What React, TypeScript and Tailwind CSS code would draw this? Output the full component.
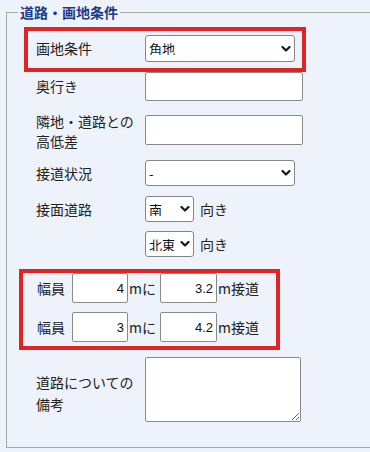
import React from "react";

// 下向きシェブロン（セレクトの矢印）
const Chevron = () => (
  <svg
    width="10"
    height="7"
    viewBox="0 0 10 7"
    className="pointer-events-none absolute right-[4px] top-1/2 -translate-y-1/2"
  >
    <polyline points="1.5,1.5 5,5 8.5,1.5" fill="none" stroke="#1a1a1a" strokeWidth="2.2" strokeLinecap="round" strokeLinejoin="round" />
  </svg>
);

type SelectProps = {
  value: string;
  options: string[];
  className: string;
};

const Select = ({ value, options, className }: SelectProps) => (
  <div className={`relative ${className}`}>
    <select
      defaultValue={value}
      className="h-full w-full appearance-none rounded-[3px] border border-[#858585] bg-white pl-[3px] text-[13px] leading-none text-[#111] outline-none"
    >
      {options.map((o) => (
        <option key={o} value={o}>
          {o}
        </option>
      ))}
    </select>
    <Chevron />
  </div>
);

const NumInput = ({ value, className }: { value: string; className: string }) => (
  <input
    defaultValue={value}
    className={`rounded-[2px] border border-[#8a8a8a] bg-white pr-[3px] text-right font-['Liberation_Sans','Noto_Sans_CJK_JP',sans-serif] text-[13px] text-[#111] outline-none ${className}`}
  />
);

const directions = ["南", "北", "東", "西", "北東", "北西", "南東", "南西"];

export default function App() {
  return (
    <div className="h-[452px] w-[370px] overflow-hidden bg-[#eef3fb] font-['Noto_Sans_CJK_JP',sans-serif] text-[14px] text-[#222]">
      <fieldset className="ml-[6px] h-[448px] w-[380px] border border-[#a8a8a8]">
        <legend className="ml-[11px] px-[2px] text-[14px] font-bold leading-[24px] text-[#1c3a86]">
          道路・画地条件
        </legend>

        {/* 画地条件 */}
        <div className="ml-[17px] mt-[3px] flex h-[45px] w-[282px] items-start border-4 border-[#e02424] pl-[8px] pt-[4px]">
          <span className="w-[109px] leading-[27px]">画地条件</span>
          <Select value="角地" options={["-", "角地", "中間画地", "準角地", "二方路地"]} className="h-[27px] w-[150px]" />
        </div>

        {/* 奥行き */}
        <div className="flex items-start pl-[29px]">
          <span className="w-[109px] leading-[29px]">奥行き</span>
          <input className="h-[29px] w-[158px] rounded-[2px] border border-[#8a8a8a] bg-white outline-none" />
        </div>

        {/* 隣地・道路との高低差 */}
        <div className="mt-[10px] flex items-start pl-[29px]">
          <span className="w-[109px] leading-[20px]">
            隣地・道路との
            <br />
            高低差
          </span>
          <input className="mt-[4px] h-[30px] w-[158px] rounded-[2px] border border-[#8a8a8a] bg-white outline-none" />
        </div>

        {/* 接道状況 */}
        <div className="mt-[9px] flex items-start pl-[29px]">
          <span className="w-[109px] leading-[26px]">接道状況</span>
          <Select value="-" options={["-", "一方", "二方", "三方", "四方"]} className="h-[26px] w-[150px]" />
        </div>

        {/* 接面道路 */}
        <div className="mt-[10px] flex items-center pl-[29px]">
          <span className="w-[109px] leading-[26px]">接面道路</span>
          <Select value="南" options={directions} className="h-[26px] w-[49px]" />
          <span className="ml-[6px]">向き</span>
        </div>
        <div className="mt-[9px] flex items-center pl-[138px]">
          <Select value="北東" options={directions} className="h-[26px] w-[49px]" />
          <span className="ml-[6px]">向き</span>
        </div>

        {/* 幅員 */}
        <div className="ml-[12px] mt-[12px] flex h-[81px] w-[261px] flex-col gap-[9px] border-4 border-[#e02424] pl-[14px]">
          {[
            ["4", "3.2"],
            ["3", "4.2"],
          ].map(([w, l], i) => (
            <div key={i} className="flex items-center">
              <span className="w-[35px]">幅員</span>
              <NumInput value={w} className="h-[30px] w-[56px]" />
              <span className="w-[32px] pl-[1px]">mに</span>
              <NumInput value={l} className="h-[30px] w-[57px]" />
              <span className="pl-[1px]">m接道</span>
            </div>
          ))}
        </div>

        {/* 備考 */}
        <div className="mt-[7px] flex items-start pl-[29px]">
          <span className="mt-[14px] w-[109px] leading-[22px]">
            道路についての
            <br />
            備考
          </span>
          <textarea className="h-[65px] w-[156px] rounded-[2px] border border-[#8a8a8a] bg-white outline-none" />
        </div>
      </fieldset>
    </div>
  );
}
